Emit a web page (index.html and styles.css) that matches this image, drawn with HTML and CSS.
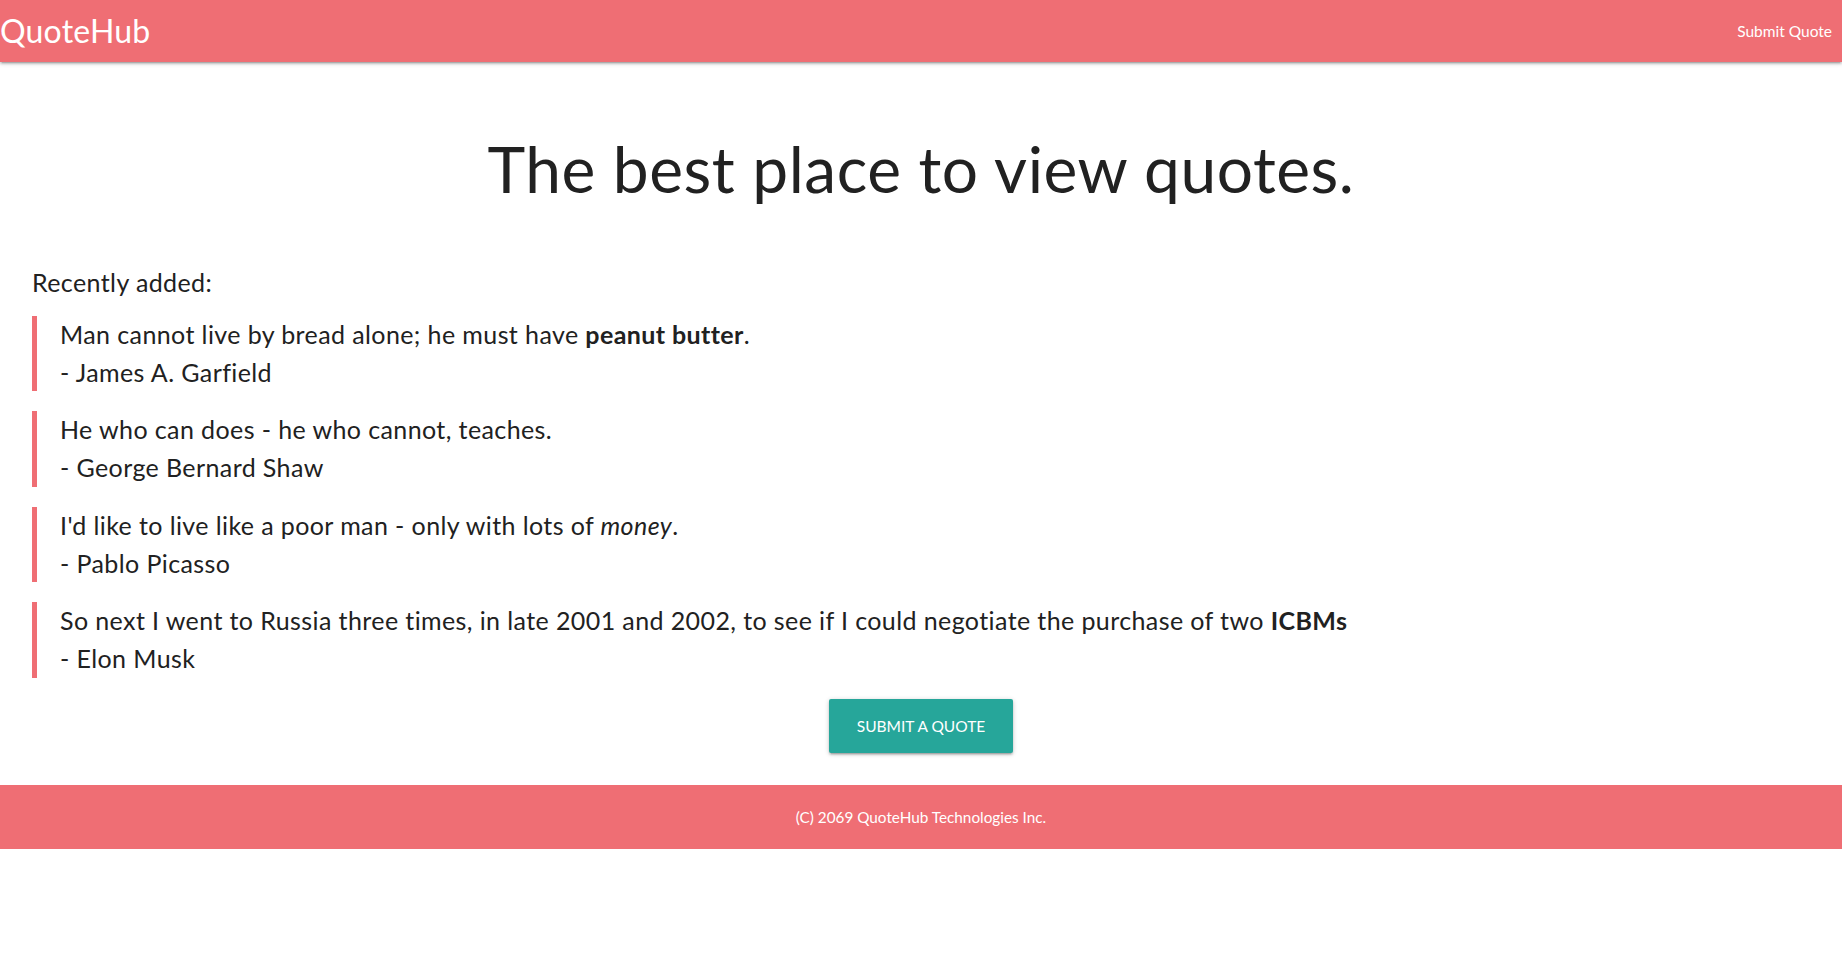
FILE: index.html
```html
<!DOCTYPE html>
<html lang="en">
<head>
<meta charset="utf-8">
<title>QuoteHub</title>
<link rel="stylesheet" href="styles.css">
</head>
<body>
<nav class="topbar">
  <a class="brand" href="#">QuoteHub</a>
  <a class="nav-link" href="#">Submit Quote</a>
</nav>
<main class="page">
  <h1 class="hero">The best place to view quotes.</h1>
  <section class="recent">
    <p class="recent-title">Recently added:</p>
    <blockquote class="quote">
      <p class="quote-text">Man cannot live by bread alone; he must have <b>peanut butter</b>.</p>
      <p class="quote-author">- James A. Garfield</p>
    </blockquote>
    <blockquote class="quote">
      <p class="quote-text">He who can does - he who cannot, teaches.</p>
      <p class="quote-author">- George Bernard Shaw</p>
    </blockquote>
    <blockquote class="quote">
      <p class="quote-text">I'd like to live like a poor man - only with lots of <i>money</i>.</p>
      <p class="quote-author">- Pablo Picasso</p>
    </blockquote>
    <blockquote class="quote">
      <p class="quote-text">So next I went to Russia three times, in late 2001 and 2002, to see if I could negotiate the purchase of two <b>ICBMs</b></p>
      <p class="quote-author">- Elon Musk</p>
    </blockquote>
  </section>
  <div class="actions">
    <a class="btn" href="#">Submit a quote</a>
  </div>
</main>
<footer class="footer">(C) 2069 QuoteHub Technologies Inc.</footer>
</body>
</html>
```
FILE: styles.css
```css
* { box-sizing: border-box; }
html, body { margin: 0; padding: 0; }
body {
  font-family: Lato, "Open Sans", sans-serif;
  font-variant-ligatures: none;
  color: #212121;
  background: #fff;
}
a { text-decoration: none; }

.topbar {
  height: 62px;
  background: #ef6e74;
  display: flex;
  align-items: center;
  justify-content: space-between;
  box-shadow: 0 2px 2px 0 rgba(0,0,0,0.14), 0 3px 1px -2px rgba(0,0,0,0.12), 0 1px 5px 0 rgba(0,0,0,0.2);
  position: relative;
  z-index: 1;
}
.brand {
  color: #fff;
  font-size: 32px;
  letter-spacing: 0.2px;
  line-height: 62px;
}
.nav-link {
  color: #fff;
  font-size: 15.5px;
  padding-right: 10px;
}

.page { padding: 0 32px; }
.hero {
  margin: 72px 0 0;
  text-align: center;
  font-weight: 400;
  font-size: 64px;
  letter-spacing: 0.55px;
  line-height: 69px;
}
.recent { margin-top: 63px; }
.recent-title {
  margin: 0 0 18px;
  font-size: 25px;
  letter-spacing: 0.4px;
  line-height: 32px;
}
.quote {
  margin: 0 0 20px;
  padding-left: 23px;
  border-left: 5px solid #ef6e74;
  font-size: 25px;
  letter-spacing: 0.4px;
  line-height: 37.7px;
}
.quote p { margin: 0; }
.quote b { font-weight: 700; }

.actions { display: flex; justify-content: center; margin-top: 21px; }
.btn {
  display: inline-block;
  height: 54px;
  line-height: 54px;
  padding: 0 28px;
  background: #26a69a;
  color: #fff;
  font-size: 15.5px;
  text-transform: uppercase;
  letter-spacing: 0;
  border-radius: 2px;
  box-shadow: 0 2px 2px 0 rgba(0,0,0,0.14), 0 3px 1px -2px rgba(0,0,0,0.12), 0 1px 5px 0 rgba(0,0,0,0.2);
}
.footer {
  margin-top: 32px;
  height: 64px;
  background: #ef6e74;
  color: #fff;
  font-size: 15.3px;
  display: flex;
  align-items: center;
  justify-content: center;
}
```
